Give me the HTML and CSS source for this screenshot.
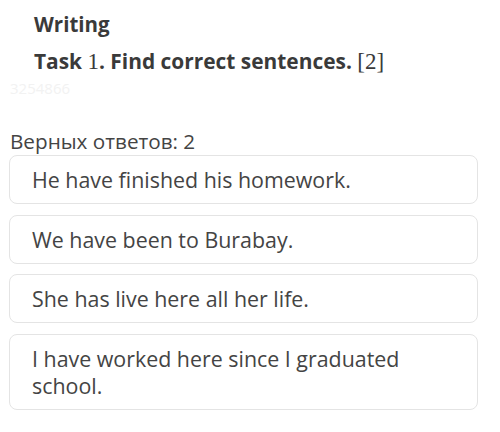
FILE: index.html
```html
<!DOCTYPE html>
<html lang="ru">
<head>
    <meta charset="UTF-8">
    <meta name="viewport" content="width=device-width, initial-scale=1.0">
    <title>Writing</title>
    <link rel="stylesheet" href="styles.css">
</head>
<body>
    <div class="task-head">
        <h2 class="section-title">Writing</h2>
        <h3 class="task-title">Task <span class="num">1</span>. Find correct sentences. <span class="num">[2]</span></h3>
    </div>
    <div class="task-id">3254866</div>

    <div class="answers">
        <p class="answers-count">Верных ответов: 2</p>
        <div class="option">He have finished his homework.</div>
        <div class="option">We have been to Burabay.</div>
        <div class="option">She has live here all her life.</div>
        <div class="option">I have worked here since I graduated school.</div>
    </div>
</body>
</html>
```

FILE: styles.css
```css
body {
    font-family: "Open Sans", Arial, sans-serif;
    background-color: #fff;
    color: #444;
    margin: 0;
}

.task-head {
    padding: 8px 0 0 34px;
}

.section-title {
    font-size: 20.5px;
    font-weight: bold;
    color: #3a3a3a;
    margin: 0;
    line-height: 32px;
}

.task-title {
    font-size: 20.9px;
    font-weight: bold;
    color: #3a3a3a;
    margin: 6px 0 0;
    line-height: 30px;
}

.task-title .num {
    font-family: "Liberation Serif", "Times New Roman", serif;
    font-weight: normal;
    font-size: 23px;
}

.task-id {
    color: #f2f2f2;
    font-size: 15px;
    padding-left: 10px;
    line-height: 22px;
}

.answers {
    padding: 28px 22px 0 9px;
}

.answers-count {
    font-size: 20.7px;
    margin: 0 0 0 1px;
    line-height: 28px;
    color: #444;
}

.option {
    border: 1.5px solid #e4e4e4;
    border-radius: 8px;
    padding: 10px 60px 10px 22px;
    margin-bottom: 10.5px;
    font-size: 21.4px;
    line-height: 27px;
    color: #444;
}
```
